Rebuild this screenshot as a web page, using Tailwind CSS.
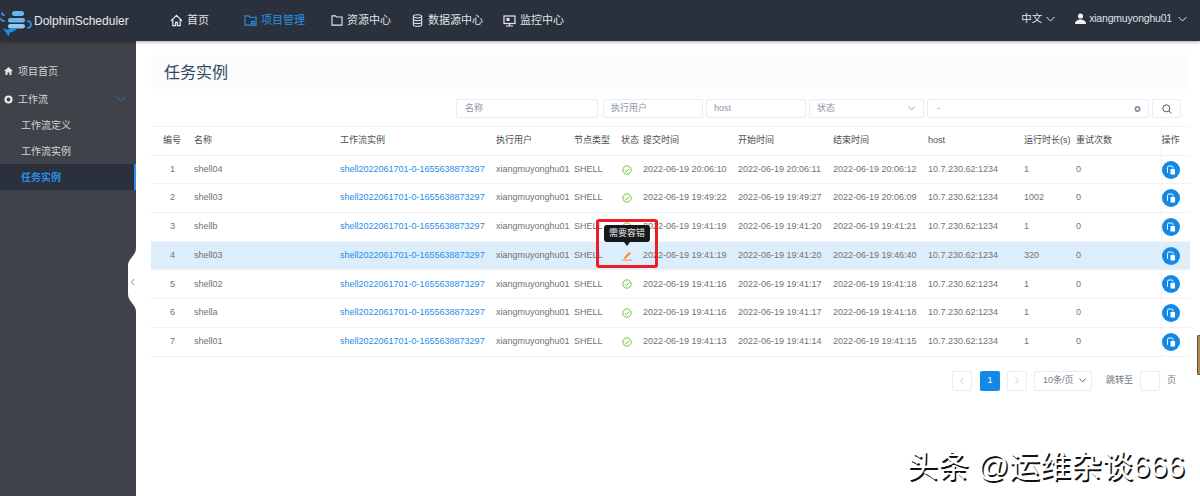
<!DOCTYPE html>
<html>
<head>
    <meta charset="utf-8">
    <title>任务实例 - DolphinScheduler</title>
    <script src="https://cdn.jsdelivr.net/npm/@tailwindcss/browser@4"></script>
</head>
<body class="w-[1200px] h-[496px] overflow-hidden bg-white relative font-['Liberation_Sans','Noto_Sans_CJK_SC',sans-serif] text-[9px] text-[#6f7378]">
    <svg class="hidden">
        <symbol id="ok" viewBox="0 0 12 12"><circle cx="6" cy="6" r="5" fill="none" stroke="#4fc72a" stroke-width="1.1"/><path d="M3.5 6.2 5.4 8l3.2-3.6" fill="none" stroke="#4fc72a" stroke-width="1.1"/></symbol>
        <symbol id="act" viewBox="0 0 18 18"><circle cx="9" cy="9" r="9" fill="#1388e6"/><path d="M6 11.500H5.500V6.500a1.500 1.500 0 0 1 1.500-1.500h2.500a1.500 1.500 0 0 1 1.500 1.500V7.500" fill="none" stroke="#fff" stroke-width="1"/><rect x="8.500" y="8" width="4.500" height="5.500" rx=".6" fill="#fff"/></symbol>
    </svg>

    <!-- top nav -->
    <header class="h-[41px] bg-[#2a313d] flex items-center text-[#dfe2e6] text-[11px] shadow-[0_1px_3px_rgba(0,0,0,0.35)] relative z-10">
        <div class="w-[164px] flex items-center shrink-0">
            <svg class="w-[32px] h-[34px] shrink-0" viewBox="0 0 32 34">
                <path d="M5 11H2.800a1.500 1.500 0 0 1 0-2.500M5 17H2.600a2.500 2.500 0 0 1-1.400-3" fill="none" stroke="#2f9be6" stroke-width="1.600"/>
                <rect x="12" y="7" width="12" height="5" rx="2.500" fill="#67b7ee"/>
                <rect x="8" y="14" width="17" height="4.500" rx="2.200" fill="#67b7ee"/>
                <rect x="8" y="20" width="17" height="4.500" rx="2.200" fill="#8fcaf2"/>
                <path d="M27 17c3 0 4 1.500 4 3.500s-1 3.500-4 3.500" fill="none" stroke="#2f9be6" stroke-width="1.600"/>
                <path d="M3 24l4 2c3-1 6-2 10-1.500-1.500 2-4 3.500-7 4l-1.500 4-2.500-4c-1-1.500-2.500-3-3-4.500z" fill="#1b93e0"/>
            </svg>
            <span class="ml-[2px] text-[12px] text-[#e8eaed] whitespace-nowrap">DolphinScheduler</span>
        </div>
        <nav class="flex items-center">
            <a class="flex items-center gap-[4px] ml-[6px]">
                <svg class="w-[13px] h-[13px]" viewBox="0 0 14 14" fill="none" stroke="#e6e8eb" stroke-width="1.300"><path d="M1 7.500 7 1.500l6 6M3 6v6.500h3V9h2v3.500h3V6"/></svg>首页</a>
            <a class="flex items-center gap-[4px] ml-[35px] text-[#2b8fe6]">
                <svg class="w-[13px] h-[12px]" viewBox="0 0 14 13" fill="none" stroke="#2b8fe6" stroke-width="1.200"><path d="M1 1h4l1 1.500h7V11H1z"/><rect x="8" y="7" width="3" height="2.500"/></svg>项目管理</a>
            <a class="flex items-center gap-[4px] ml-[26px]">
                <svg class="w-[12px] h-[11px]" viewBox="0 0 13 12" fill="none" stroke="#e6e8eb" stroke-width="1.200"><path d="M1 1h4l1 1.200h6V11H1z"/></svg>资源中心</a>
            <a class="flex items-center gap-[5px] ml-[21px]">
                <svg class="w-[11px] h-[13px]" viewBox="0 0 11 14" fill="none" stroke="#e6e8eb" stroke-width="1.100"><ellipse cx="5.500" cy="2.500" rx="4.500" ry="1.700"/><path d="M1 2.500v9c0 1 2 1.700 4.500 1.700S10 12.500 10 11.500v-9M1 5.500c0 1 2 1.700 4.500 1.700S10 6.500 10 5.500M1 8.500c0 1 2 1.700 4.500 1.700S10 9.500 10 8.500"/></svg>数据源中心</a>
            <a class="flex items-center gap-[4px] ml-[20px]">
                <svg class="w-[13px] h-[12px]" viewBox="0 0 13 12" fill="none" stroke="#e6e8eb" stroke-width="1.200"><rect x="1" y="1" width="11" height="7.500"/><rect x="3.500" y="3" width="3" height="3" fill="#e6e8eb" stroke="none"/><path d="M6.500 8.500v2M3 11h7"/></svg>监控中心</a>
        </nav>
        <div class="ml-auto flex items-center text-[10.5px] mb-[4px]">
            <span>中文</span>
            <svg class="w-[9px] h-[6px] ml-[4px]" viewBox="0 0 9 6" fill="none" stroke="#dfe2e6"><path d="M.5 1 4.500 5l4-4"/></svg>
            <svg class="w-[11px] h-[11px] ml-[20px]" viewBox="0 0 11 11" fill="#f0f1f3"><circle cx="5.500" cy="3" r="2.600"/><path d="M0 11c0-3 2.500-4.500 5.500-4.500S11 8 11 11z"/></svg>
            <span class="ml-[3px] tracking-[-0.2px] whitespace-nowrap">xiangmuyonghu01</span>
            <svg class="w-[9px] h-[6px] ml-[6px] mr-[13px]" viewBox="0 0 9 6" fill="none" stroke="#dfe2e6"><path d="M.5 1 4.500 5l4-4"/></svg>
        </div>
    </header>

    <div class="flex h-[455px]">
        <!-- side menu -->
        <aside class="w-[136px] shrink-0 bg-[#3f4249] text-[10px] text-[#d3d5d8] pt-[17px]">
            <div class="h-[26px] flex items-center pl-[4px] gap-[5px]">
                <svg class="w-[9px] h-[8px]" viewBox="0 0 9 8" fill="#e4e5e7"><path d="M4.500 0 9 4H7.500v4H5.500V5.500h-2V8h-2V4H0z"/></svg>项目首页</div>
            <div class="h-[26px] flex items-center pl-[4px] gap-[5px] mt-[2px]">
                <svg class="w-[9px] h-[9px]" viewBox="0 0 9 9"><circle cx="4.500" cy="4.500" r="3" fill="none" stroke="#e8e9eb" stroke-width="2.200"/></svg>工作流
                <svg class="w-[12px] h-[6px] ml-auto mr-[9px]" viewBox="0 0 12 6" fill="none" stroke="#2b6fa8"><path d="M1 .5 6 5l5-4.500"/></svg>
            </div>
            <div class="h-[26px] flex items-center pl-[21px]">工作流定义</div>
            <div class="h-[26px] flex items-center pl-[21px]">工作流实例</div>
            <div class="h-[26px] flex items-center pl-[21px] bg-[#2a303c] border-r-2 border-[#2b8fe6] text-[#2b8fe6] font-bold">任务实例</div>
        </aside>

        <!-- content -->
        <main class="flex-1 pl-[15px] pr-[10px] pt-[14px] min-w-0">
            <div class="h-[34px] bg-[#fdfbfe] flex items-center pl-[13px] pt-[2px] text-[16px] text-[#2c4a63]">任务实例</div>

            <div class="h-[19px] mt-[10px] flex text-[#8a97a5] text-[9px] pl-[305px] gap-[3px]">
                <div class="w-[142px] border border-[#e8ecf3] rounded-[2px] flex items-center pl-[8px]">名称</div>
                <div class="w-[100px] border border-[#e8ecf3] rounded-[2px] flex items-center pl-[7px] ml-[2px]">执行用户</div>
                <div class="w-[100px] border border-[#e8ecf3] rounded-[2px] flex items-center pl-[7px]">host</div>
                <div class="w-[115px] border border-[#e8ecf3] rounded-[2px] flex items-center pl-[7px]">状态
                    <svg class="w-[7px] h-[5px] ml-auto mr-[8px]" viewBox="0 0 7 5" fill="none" stroke="#9aa6b2"><path d="M.5 .5 3.500 4l3-3.500"/></svg>
                </div>
                <div class="w-[222px] border border-[#e8ecf3] rounded-[2px] flex items-center pl-[9px]">-
                    <svg class="w-[7px] h-[8px] ml-auto mr-[7px]" viewBox="0 0 7 8"><circle cx="3.500" cy="4" r="3" fill="#7f95aa"/><circle cx="3.500" cy="4" r="1.200" fill="#fff"/></svg>
                </div>
                <div class="w-[29px] border border-[#e8ecf3] rounded-[2px] flex items-center justify-center">
                    <svg class="w-[10px] h-[10px]" viewBox="0 0 10 10" fill="none" stroke="#4a5866" stroke-width="1"><circle cx="4.300" cy="4.300" r="3.500"/><path d="M7 7l2.500 2.500"/></svg>
                </div>
            </div>

            <table class="mt-[8px] w-[1039px] table-fixed border-collapse border-t border-[#f2f2f8] whitespace-nowrap [&_td]:border-b [&_td]:border-[#f1f1f9] [&_td]:p-0 [&_th]:border-b [&_th]:border-[#f1f1f9] [&_th]:p-0 [&_th]:font-normal [&_th]:text-left [&_th]:text-[#4b4f55] [&_tr]:h-[28.700px]">
                <colgroup>
                    <col class="w-[43px]"><col class="w-[146px]"><col class="w-[156px]"><col class="w-[78px]"><col class="w-[47px]"><col class="w-[22px]"><col class="w-[95px]"><col class="w-[95px]"><col class="w-[95px]"><col class="w-[96px]"><col class="w-[52px]"><col class="w-[85px]"><col class="w-[29px]">
                </colgroup>
                <thead>
                    <tr>
                        <th class="pl-[12px]!">编号</th><th>名称</th><th>工作流实例</th><th>执行用户</th><th>节点类型</th><th>状态</th><th>提交时间</th><th>开始时间</th><th>结束时间</th><th>host</th><th>运行时长(s)</th><th>重试次数</th><th class="border-l border-[#eef0f8]">操作</th>
                    </tr>
                </thead>
                <tbody>
                    <tr>
                        <td class="text-center">1</td><td>shell04</td><td class="text-[#1f8ee8]">shell2022061701-0-1655638873297</td><td>xiangmuyonghu01</td><td>SHELL</td><td><svg class="w-[10px] h-[10px] ml-[1px]"><use href="#ok"/></svg></td><td>2022-06-19 20:06:10</td><td>2022-06-19 20:06:11</td><td>2022-06-19 20:06:12</td><td>10.7.230.62:1234</td><td>1</td><td>0</td><td class="border-l border-[#eef0f8]"><svg class="w-[18px] h-[18px]"><use href="#act"/></svg></td>
                    </tr>
                    <tr>
                        <td class="text-center">2</td><td>shell03</td><td class="text-[#1f8ee8]">shell2022061701-0-1655638873297</td><td>xiangmuyonghu01</td><td>SHELL</td><td><svg class="w-[10px] h-[10px] ml-[1px]"><use href="#ok"/></svg></td><td>2022-06-19 19:49:22</td><td>2022-06-19 19:49:27</td><td>2022-06-19 20:06:09</td><td>10.7.230.62:1234</td><td>1002</td><td>0</td><td class="border-l border-[#eef0f8]"><svg class="w-[18px] h-[18px]"><use href="#act"/></svg></td>
                    </tr>
                    <tr>
                        <td class="text-center">3</td><td>shellb</td><td class="text-[#1f8ee8]">shell2022061701-0-1655638873297</td><td>xiangmuyonghu01</td><td>SHELL</td><td><svg class="w-[10px] h-[10px] ml-[1px]"><use href="#ok"/></svg></td><td>2022-06-19 19:41:19</td><td>2022-06-19 19:41:20</td><td>2022-06-19 19:41:21</td><td>10.7.230.62:1234</td><td>1</td><td>0</td><td class="border-l border-[#eef0f8]"><svg class="w-[18px] h-[18px]"><use href="#act"/></svg></td>
                    </tr>
                    <tr class="bg-[#dceefc]">
                        <td class="text-center">4</td><td>shell03</td><td class="text-[#1f8ee8]">shell2022061701-0-1655638873297</td><td>xiangmuyonghu01</td><td>SHELL</td><td>
                            <svg class="w-[10px] h-[10px] ml-[1px]" viewBox="0 0 10 10"><path d="M2 6.500 7.200 1l1.600 1.500-5.300 5.300H2z" fill="#f08a1d"/><path d="M0 9.200h10" stroke="#f2a65a" stroke-width="1.200"/></svg>
                        </td><td>2022-06-19 19:41:19</td><td>2022-06-19 19:41:20</td><td>2022-06-19 19:46:40</td><td>10.7.230.62:1234</td><td>320</td><td>0</td><td class="border-l border-[#eef0f8]"><svg class="w-[18px] h-[18px]"><use href="#act"/></svg></td>
                    </tr>
                    <tr>
                        <td class="text-center">5</td><td>shell02</td><td class="text-[#1f8ee8]">shell2022061701-0-1655638873297</td><td>xiangmuyonghu01</td><td>SHELL</td><td><svg class="w-[10px] h-[10px] ml-[1px]"><use href="#ok"/></svg></td><td>2022-06-19 19:41:16</td><td>2022-06-19 19:41:17</td><td>2022-06-19 19:41:18</td><td>10.7.230.62:1234</td><td>1</td><td>0</td><td class="border-l border-[#eef0f8]"><svg class="w-[18px] h-[18px]"><use href="#act"/></svg></td>
                    </tr>
                    <tr>
                        <td class="text-center">6</td><td>shella</td><td class="text-[#1f8ee8]">shell2022061701-0-1655638873297</td><td>xiangmuyonghu01</td><td>SHELL</td><td><svg class="w-[10px] h-[10px] ml-[1px]"><use href="#ok"/></svg></td><td>2022-06-19 19:41:16</td><td>2022-06-19 19:41:17</td><td>2022-06-19 19:41:18</td><td>10.7.230.62:1234</td><td>1</td><td>0</td><td class="border-l border-[#eef0f8]"><svg class="w-[18px] h-[18px]"><use href="#act"/></svg></td>
                    </tr>
                    <tr>
                        <td class="text-center">7</td><td>shell01</td><td class="text-[#1f8ee8]">shell2022061701-0-1655638873297</td><td>xiangmuyonghu01</td><td>SHELL</td><td><svg class="w-[10px] h-[10px] ml-[1px]"><use href="#ok"/></svg></td><td>2022-06-19 19:41:13</td><td>2022-06-19 19:41:14</td><td>2022-06-19 19:41:15</td><td>10.7.230.62:1234</td><td>1</td><td>0</td><td class="border-l border-[#eef0f8]"><svg class="w-[18px] h-[18px]"><use href="#act"/></svg></td>
                    </tr>
                </tbody>
            </table>

            <!-- pager -->
            <div class="mt-[14px] h-[20px] flex items-center pl-[801px] text-[#6d7884]">
                <div class="w-[20px] h-[20px] border border-[#e8ecf3] rounded-[2px] flex items-center justify-center">
                    <svg class="w-[4px] h-[7px]" viewBox="0 0 4 7" fill="none" stroke="#c3cbd4"><path d="M3.500 .5.500 3.500l3 3"/></svg>
                </div>
                <div class="w-[20px] h-[20px] ml-[8px] bg-[#1388e6] rounded-[2px] text-white flex items-center justify-center">1</div>
                <div class="w-[20px] h-[20px] ml-[7px] border border-[#e8ecf3] rounded-[2px] flex items-center justify-center">
                    <svg class="w-[4px] h-[7px]" viewBox="0 0 4 7" fill="none" stroke="#c3cbd4"><path d="M.5 .5l3 3-3 3"/></svg>
                </div>
                <div class="w-[58px] h-[20px] ml-[7px] border border-[#e8ecf3] rounded-[2px] flex items-center pl-[8px]">10条/页
                    <svg class="w-[7px] h-[5px] ml-[5px]" viewBox="0 0 7 5" fill="none" stroke="#5e6a76"><path d="M.5 .5 3.500 4l3-3.500"/></svg>
                </div>
                <span class="ml-[14px]">跳转至</span>
                <div class="w-[20px] h-[20px] ml-[7px] border border-[#e8ecf3] rounded-[2px]"></div>
                <span class="ml-[7px]">页</span>
            </div>
        </main>
    </div>

    <!-- sidebar collapse handle -->
    <svg class="absolute left-[126px] top-[248px] w-[10px] h-[64px]" viewBox="0 0 10 64">
        <path d="M10 0C10 8 2 10 2 18v28c0 8 8 10 8 18z" fill="#fff"/>
        <path d="M8 31 5.500 34 8 37" fill="none" stroke="#6f94e0" stroke-width="1"/>
    </svg>

    <!-- tooltip -->
    <div class="absolute left-[604px] top-[225px] w-[46px] h-[17px] bg-[#17181a] rounded-[3px] text-[#e8e8e8] flex items-center justify-center">需要容错
        <span class="absolute left-[20px] top-[17px] border-x-[3px] border-x-transparent border-t-[4px] border-t-[#17181a]"></span>
    </div>

    <!-- red annotation box -->
    <div class="absolute left-[596px] top-[219px] w-[62px] h-[49px] border-[3px] border-[#ee1c25] rounded-[3px]"></div>

    <!-- cropped thing on the right edge -->
    <div class="absolute left-[1197px] top-[335px] w-[3px] h-[40px] bg-[#b08a50] border-l border-y border-[#55504a] rounded-l-[2px]"></div>

    <!-- watermark -->
    <div class="absolute left-[907px] top-[444px] text-[31px] text-white whitespace-nowrap [text-shadow:1.500px_1.500px_0_#111]">头条 @运维杂谈666</div>
</body>
</html>
